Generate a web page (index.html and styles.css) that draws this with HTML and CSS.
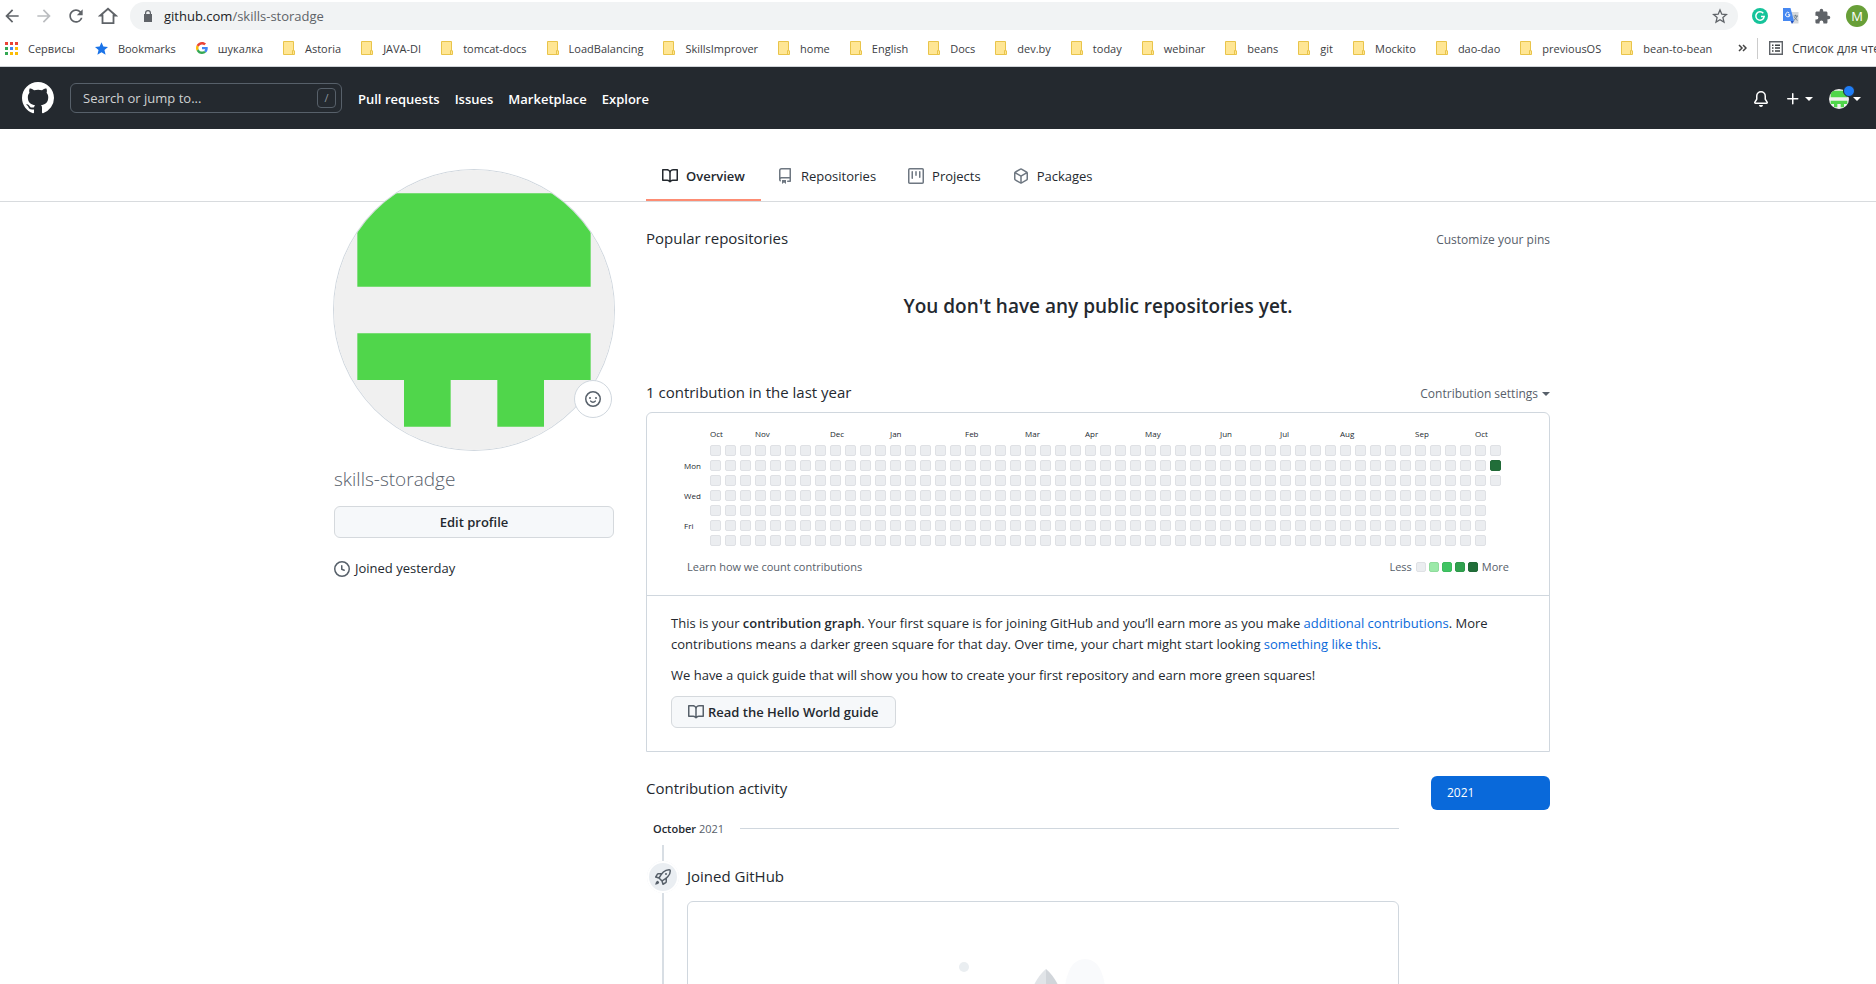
FILE: index.html
```html
<!DOCTYPE html>
<html lang="en">
<head>
<meta charset="utf-8">
<title>skills-storadge</title>
<link rel="stylesheet" href="styles.css">
</head>
<body>
<svg class="sprite" aria-hidden="true">
  <symbol id="folder" viewBox="0 0 12 14"><path d="M.5.5h10v9.300h1v3.700H.5z" fill="#ffe694" stroke="#e9c44a"/><path d="M9.500 13V9.500h1" fill="none" stroke="#e9c44a"/></symbol>
  <symbol id="book" viewBox="0 0 16 16"><path fill-rule="evenodd" d="M0 1.750A.75.75 0 01.75 1h4.253c1.227 0 2.317.59 3 1.501A3.744 3.744 0 0111.006 1h4.245a.75.75 0 01.75.75v10.500a.75.75 0 01-.75.75h-4.507a2.250 2.250 0 00-1.591.659l-.622.621a.75.75 0 01-1.060 0l-.622-.621A2.250 2.250 0 005.258 13H.75a.75.75 0 01-.75-.75V1.750zm8.755 3a2.250 2.250 0 012.250-2.250H14.500v9h-3.757c-.71 0-1.400.201-1.992.572l.004-7.322zm-1.504 7.324l.004-5.073-.002-2.253A2.250 2.250 0 005.003 2.500H1.500v9h3.757a3.750 3.750 0 011.994.574z"/></symbol>
  <symbol id="caret" viewBox="0 0 8 4"><path d="M0 0h8L4 4z"/></symbol>
  <symbol id="identicon" viewBox="0 0 420 420"><path fill="#f0f0f0" d="M0 0h420v420H0z"/><path fill="#50d64b" d="M35 35h350v140H35zM35 245h350v70h-70v70h-70v-70h-70v70h-70v-70H35z"/></symbol>
</svg>

<div class="browser">
  <div class="toolbar">
    <div class="toolbar-nav">
      <button class="icon-btn" aria-label="Back"><svg width="20" height="20" viewBox="0 0 24 24"><path d="M20 11H7.830l5.590-5.590L12 4l-8 8 8 8 1.410-1.410L7.830 13H20z"/></svg></button>
      <button class="icon-btn disabled" aria-label="Forward"><svg width="20" height="20" viewBox="0 0 24 24"><path d="M4 13h12.170l-5.590 5.590L12 20l8-8-8-8-1.410 1.410L16.170 11H4z"/></svg></button>
      <button class="icon-btn" aria-label="Reload"><svg width="20" height="20" viewBox="0 0 24 24"><path d="M17.650 6.350C16.200 4.900 14.210 4 12 4c-4.420 0-7.990 3.580-7.990 8s3.570 8 7.990 8c3.730 0 6.840-2.550 7.730-6h-2.080A5.990 5.990 0 0112 18c-3.310 0-6-2.690-6-6s2.690-6 6-6c1.660 0 3.140.69 4.220 1.780L13 11h7V4z"/></svg></button>
      <button class="icon-btn" aria-label="Home"><svg width="20" height="20" viewBox="0 0 20 20"><path d="M4.500 17.200V9.500H2.300L10 2.800l7.700 6.700h-2.200v7.700z" fill="none" stroke="#5f6368" stroke-width="1.800"/></svg></button>
    </div>
    <div class="omnibox">
      <svg width="10" height="12" viewBox="0 0 10 12"><path fill-rule="evenodd" d="M2 4V3a3 3 0 016 0v1h1v8H1V4zm1.200 0h3.600V3a1.800 1.800 0 00-3.600 0z"/></svg>
      <div class="url" role="textbox" aria-label="Address" contenteditable="true" spellcheck="false"><b>github.com</b>/skills-storadge</div>
      <button class="icon-btn" aria-label="Bookmark this page"><svg width="16" height="16" viewBox="0 0 16 16"><path d="M8 1.900l1.800 4.300 4.600.4-3.500 3 1.100 4.500L8 11.700l-4 2.400 1.100-4.500-3.500-3 4.600-.4z" fill="none" stroke="#5f6368" stroke-width="1.300"/></svg></button>
    </div>
    <div class="extensions">
      <button class="icon-btn" aria-label="Grammarly"><svg width="16" height="16" viewBox="0 0 16 16"><circle cx="8" cy="8" r="8" fill="#15c39a"/><path d="M11.300 5.300A4.200 4.200 0 1012.200 8.500H9" fill="none" stroke="#fff" stroke-width="1.500"/></svg></button>
      <button class="icon-btn" aria-label="Translate"><svg width="16" height="16" viewBox="0 0 16 16"><path d="M6 4h9.500v11.500H10z" fill="#d5d8db"/><path d="M0 0h7.500l3.500 13H0z" fill="#4688f1"/><path d="M7.500 13H11l-2 3z" fill="#1f4fc0"/><path d="M6.300 5A2.200 2.200 0 107 6.800H5" fill="none" stroke="#fff"/><path d="M10.500 8h4.500M12.500 6.800V8M14 8c-.4 2-1.700 3.500-3 4.200M11.500 9c.6 1.500 1.700 2.700 3 3.300" fill="none" stroke="#667887" stroke-width=".9"/></svg></button>
      <button class="icon-btn" aria-label="Extensions"><svg width="17" height="17" viewBox="0 0 24 24"><path d="M20.500 11H19V7c0-1.100-.9-2-2-2h-4V3.500a2.500 2.500 0 00-5 0V5H4c-1.100 0-1.990.9-1.990 2v3.800H3.500a2.700 2.700 0 010 5.400H2V20c0 1.100.9 2 2 2h3.800v-1.500a2.700 2.700 0 015.400 0V22H17c1.100 0 2-.9 2-2v-4h1.500a2.500 2.500 0 000-5z"/></svg></button>
      <button class="profile-btn">M</button>
    </div>
  </div>
  <div class="bookmarks">
    <nav class="bookmark-list">
      <a href="#"><svg width="13" height="13" viewBox="0 0 13 13"><path fill="#ea4335" d="M0 0h3v3H0zM5 0h3v3H5zM10 0h3v3h-3z"/><path fill="#34a853" d="M0 5h3v3H0zM0 10h3v3H0z"/><path fill="#4285f4" d="M5 5h3v3H5z"/><path fill="#fbbc05" d="M10 5h3v3h-3zM5 10h3v3H5zM10 10h3v3h-3z"/></svg>Сервисы</a>
      <a href="#"><svg width="13" height="13" viewBox="0 0 14 14"><path fill="#1a73e8" d="M7 .3l2 4.600 5 .5-3.800 3.300 1.200 4.900L7 11l-4.400 2.600 1.200-4.900L0 5.400l5-.5z"/></svg>Bookmarks</a>
      <a href="#"><svg width="12" height="12" viewBox="0 0 48 48"><path fill="#ea4335" d="M24 9.500c3.540 0 6.710 1.220 9.210 3.600l6.850-6.850C35.900 2.380 30.470 0 24 0 14.620 0 6.510 5.380 2.560 13.220l7.980 6.190C12.430 13.720 17.740 9.500 24 9.500z"/><path fill="#4285f4" d="M46.980 24.550c0-1.570-.15-3.090-.38-4.550H24v9.020h12.940c-.58 2.960-2.260 5.480-4.780 7.180l7.730 6c4.510-4.180 7.090-10.360 7.090-17.650z"/><path fill="#fbbc05" d="M10.530 28.590c-.48-1.450-.76-2.990-.76-4.590s.27-3.140.76-4.590l-7.980-6.190C.92 16.460 0 20.120 0 24c0 3.880.92 7.540 2.560 10.780z"/><path fill="#34a853" d="M24 48c6.480 0 11.930-2.130 15.890-5.810l-7.730-6c-2.150 1.450-4.920 2.300-8.160 2.300-6.260 0-11.570-4.220-13.470-9.910l-7.980 6.190C6.510 42.620 14.620 48 24 48z"/></svg>шукалка</a>
      <button><svg width="12" height="14"><use href="#folder"/></svg>Astoria</button>
      <button><svg width="12" height="14"><use href="#folder"/></svg>JAVA-DI</button>
      <button><svg width="12" height="14"><use href="#folder"/></svg>tomcat-docs</button>
      <button><svg width="12" height="14"><use href="#folder"/></svg>LoadBalancing</button>
      <button><svg width="12" height="14"><use href="#folder"/></svg>SkillsImprover</button>
      <button><svg width="12" height="14"><use href="#folder"/></svg>home</button>
      <button><svg width="12" height="14"><use href="#folder"/></svg>English</button>
      <button><svg width="12" height="14"><use href="#folder"/></svg>Docs</button>
      <button><svg width="12" height="14"><use href="#folder"/></svg>dev.by</button>
      <button><svg width="12" height="14"><use href="#folder"/></svg>today</button>
      <button><svg width="12" height="14"><use href="#folder"/></svg>webinar</button>
      <button><svg width="12" height="14"><use href="#folder"/></svg>beans</button>
      <button><svg width="12" height="14"><use href="#folder"/></svg>git</button>
      <button><svg width="12" height="14"><use href="#folder"/></svg>Mockito</button>
      <button><svg width="12" height="14"><use href="#folder"/></svg>dao-dao</button>
      <button><svg width="12" height="14"><use href="#folder"/></svg>previousOS</button>
      <button><svg width="12" height="14"><use href="#folder"/></svg>bean-to-bean</button>
    </nav>
    <div class="bookmark-end">
      <button class="icon-btn" aria-label="More bookmarks"><svg width="9" height="8" viewBox="0 0 9 8"><path d="M1 1l3 3-3 3M5 1l3 3-3 3" fill="none" stroke="#444" stroke-width="1.500"/></svg></button>
      <button class="reading-list"><svg width="14" height="14" viewBox="0 0 14 14"><path d="M.7.7h12.600v12.600H.7z" fill="none" stroke="#5f6368" stroke-width="1.400"/><path d="M3 3.500h1.500V5H3zM6 3.500h5V5H6zM3 6.300h1.500v1.500H3zM6 6.300h5v1.500H6zM3 9.200h1.500v1.500H3zM6 9.200h5v1.500H6z"/></svg>Список для чтения</button>
    </div>
  </div>
</div>

<header class="site-header">
  <a href="#" class="logo" aria-label="Homepage"><svg width="32" height="32" viewBox="0 0 16 16"><path d="M8 0C3.580 0 0 3.580 0 8c0 3.540 2.290 6.530 5.470 7.590.4.070.55-.17.55-.38 0-.19-.01-.82-.01-1.490-2.010.37-2.530-.49-2.690-.94-.09-.23-.48-.94-.82-1.130-.28-.15-.68-.52-.01-.53.63-.01 1.080.58 1.230.82.72 1.210 1.870.87 2.330.66.070-.52.28-.87.51-1.070-1.780-.2-3.640-.89-3.640-3.950 0-.87.31-1.590.82-2.150-.08-.2-.36-1.020.08-2.120 0 0 .67-.21 2.200.82.64-.18 1.320-.27 2-.27.68 0 1.360.09 2 .27 1.530-1.040 2.200-.82 2.200-.82.44 1.100.16 1.920.08 2.120.51.56.82 1.270.82 2.150 0 3.070-1.870 3.750-3.650 3.950.29.25.54.73.54 1.480 0 1.070-.01 1.930-.01 2.200 0 .21.15.46.55.38A8.013 8.013 0 0016 8c0-4.420-3.580-8-8-8z"/></svg></a>
  <label class="search"><input type="text" placeholder="Search or jump to..." aria-label="Search or jump to"><kbd>/</kbd></label>
  <nav class="site-nav">
    <a href="#">Pull requests</a><a href="#">Issues</a><a href="#">Marketplace</a><a href="#">Explore</a>
  </nav>
  <div class="site-actions">
    <a href="#" aria-label="Notifications"><svg width="16" height="16" viewBox="0 0 16 16"><path d="M8 16a2 2 0 001.985-1.750c.017-.137-.097-.25-.235-.25h-3.500c-.138 0-.252.113-.235.25A2 2 0 008 16z"/><path fill-rule="evenodd" d="M8 1.500A3.500 3.500 0 004.500 5v2.947c0 .346-.102.683-.294.97L2.500 11.500h11l-1.706-2.583a1.750 1.750 0 01-.294-.97V5A3.500 3.500 0 008 1.500zM3 5a5 5 0 0110 0v2.947c0 .05.015.098.042.139l1.703 2.555A1.518 1.518 0 0113.482 13H2.518a1.518 1.518 0 01-1.263-2.360l1.703-2.554A.25.25 0 003 7.947V5z"/></svg></a>
    <button class="menu-btn" aria-label="Create new"><svg width="16" height="16" viewBox="0 0 16 16"><path d="M7.750 2a.75.75 0 01.75.75V7h4.250a.75.75 0 110 1.500H8.500v4.250a.75.75 0 11-1.500 0V8.500H2.750a.75.75 0 010-1.500H7V2.750A.75.75 0 017.750 2z"/></svg><svg width="8" height="4"><use href="#caret"/></svg></button>
    <button class="menu-btn user-menu" aria-label="Account"><svg class="round" width="20" height="20"><use href="#identicon"/></svg><i class="dot"></i><svg width="8" height="4"><use href="#caret"/></svg></button>
  </div>
</header>

<div class="tabs-bar">
  <div class="container">
    <nav class="tabs">
      <a href="#" class="selected"><svg width="16" height="16"><use href="#book"/></svg>Overview</a>
      <a href="#"><svg width="16" height="16" viewBox="0 0 16 16"><path fill-rule="evenodd" d="M2 2.500A2.500 2.500 0 014.500 0h8.750a.75.75 0 01.75.75v12.500a.75.75 0 01-.75.75h-2.500a.75.75 0 110-1.500h1.750v-2h-8a1 1 0 00-.714 1.700.75.75 0 01-1.072 1.050A2.495 2.495 0 012 11.500v-9zm10.500-1V9h-8c-.356 0-.694.074-1 .208V2.500a1 1 0 011-1h8zM5 12.250v3.250a.25.25 0 00.4.2l1.450-1.087a.25.25 0 01.3 0L8.600 15.700a.25.25 0 00.4-.2v-3.250a.25.25 0 00-.25-.25h-3.500a.25.25 0 00-.25.25z"/></svg>Repositories</a>
      <a href="#"><svg width="16" height="16" viewBox="0 0 16 16"><path fill-rule="evenodd" d="M1.750 0A1.750 1.750 0 000 1.750v12.500C0 15.216.784 16 1.750 16h12.500A1.750 1.750 0 0016 14.250V1.750A1.750 1.750 0 0014.250 0H1.750zM1.500 1.750a.25.25 0 01.25-.25h12.500a.25.25 0 01.25.25v12.500a.25.25 0 01-.25.25H1.750a.25.25 0 01-.25-.25V1.750zM11.750 3a.75.75 0 00-.75.75v5.500a.75.75 0 001.500 0v-5.500a.75.75 0 00-.75-.75zm-8.250.75a.75.75 0 011.500 0v6.500a.75.75 0 01-1.500 0v-6.500zM8 3a.75.75 0 00-.75.75v3.500a.75.75 0 001.500 0v-3.500A.75.75 0 008 3z"/></svg>Projects</a>
      <a href="#"><svg width="16" height="16" viewBox="0 0 16 16"><path fill-rule="evenodd" d="M8.878.392a1.750 1.750 0 00-1.756 0l-5.250 3.045A1.750 1.750 0 001 4.951v6.098c0 .624.332 1.200.872 1.514l5.250 3.045a1.750 1.750 0 001.756 0l5.250-3.045c.54-.313.872-.89.872-1.514V4.951c0-.624-.332-1.200-.872-1.514L8.878.392zM7.875 1.690a.25.25 0 01.25 0l4.630 2.685L8 7.133 3.245 4.375l4.630-2.685zM2.500 5.677v5.372c0 .09.047.171.125.216l4.625 2.683V8.432L2.500 5.677zm6.250 8.271l4.625-2.683a.25.25 0 00.125-.216V5.677L8.750 8.432v5.516z"/></svg>Packages</a>
    </nav>
  </div>
</div>

<div class="container profile">
  <aside class="sidebar">
    <div class="avatar">
      <svg class="round" viewBox="0 0 420 420"><use href="#identicon"/></svg>
      <button class="status" aria-label="Set status"><svg width="16" height="16" viewBox="0 0 16 16"><circle cx="8" cy="8" r="7.250" fill="none" stroke="#57606a" stroke-width="1.500"/><circle cx="5" cy="7" r="1"/><circle cx="11" cy="7" r="1"/><path d="M5.700 10.100c.5.700 1.300 1.100 2.300 1.100s1.800-.4 2.300-1.100" fill="none" stroke="#57606a" stroke-width="1.400" stroke-linecap="round"/></svg></button>
    </div>
    <h1>skills-storadge</h1>
    <button class="btn btn-block">Edit profile</button>
    <p class="joined"><svg width="16" height="16" viewBox="0 0 16 16"><path fill-rule="evenodd" d="M1.500 8a6.500 6.500 0 1113 0 6.500 6.500 0 01-13 0zM8 0a8 8 0 100 16A8 8 0 008 0zm.5 4.750a.75.75 0 00-1.500 0v3.500a.75.75 0 00.471.696l2.500 1a.75.75 0 00.557-1.392L8.500 7.742V4.750z"/></svg>Joined yesterday</p>
  </aside>

  <main>
    <div class="section-head"><h2>Popular repositories</h2><button class="muted-btn">Customize your pins</button></div>
    <h3 class="blank">You don't have any public repositories yet.</h3>
    <div class="section-head"><h2>1 contribution in the last year</h2><button class="muted-btn">Contribution settings <svg width="8" height="4"><use href="#caret"/></svg></button></div>

    <section class="box">
      <div class="graph">
        <div class="weekdays"><span>Mon</span><span>Wed</span><span>Fri</span></div>
        <div class="calendar">
          <div class="months" id="months"></div>
          <div class="days" id="days"></div>
        </div>
      </div>
      <div class="graph-foot">
        <a href="#">Learn how we count contributions</a>
        <div class="legend">Less <span class="levels"><i></i><i class="l1"></i><i class="l2"></i><i class="l3"></i><i class="l4"></i></span> More</div>
      </div>
      <div class="intro">
        <p>This is your <strong>contribution graph</strong>. Your first square is for joining GitHub and you’ll earn more as you make <a href="#">additional contributions</a>. More contributions means a darker green square for that day. Over time, your chart might start looking <a href="#">something like this</a>.</p>
        <p>We have a quick guide that will show you how to create your first repository and earn more green squares!</p>
        <a href="#" class="btn"><svg width="16" height="16"><use href="#book"/></svg>Read the Hello World guide</a>
      </div>
    </section>

    <div class="activity">
      <div class="timeline">
        <h2>Contribution activity</h2>
        <h3 class="month"><span>October <em>2021</em></span></h3>
        <div class="event">
          <div class="rail"><span class="badge"><svg width="16" height="16" viewBox="0 0 16 16"><path fill-rule="evenodd" d="M14.064 0a8.750 8.750 0 00-6.187 2.563l-.459.458c-.314.314-.616.641-.904.979H3.310a1.750 1.750 0 00-1.490.833L.11 7.607a.75.75 0 00.418 1.110l3.102.954c.037.051.079.1.124.145l2.429 2.428c.046.046.094.088.145.125l.954 3.102a.75.75 0 001.110.418l2.774-1.707a1.750 1.750 0 00.833-1.490V9.485c.338-.288.665-.59.979-.904l.458-.459A8.750 8.750 0 0016 1.936V1.750A1.750 1.750 0 0014.250 0h-.186zM10.500 10.625c-.088.06-.177.118-.266.175l-2.350 1.521.548 1.783 1.949-1.200a.25.25 0 00.119-.213v-2.066zM3.678 8.116L5.200 5.766c.058-.09.117-.178.176-.266H3.309a.25.25 0 00-.213.119l-1.200 1.950 1.782.547zm5.260-4.493A7.250 7.250 0 0114.063 1.500h.186a.25.25 0 01.25.25v.186a7.250 7.250 0 01-2.123 5.127l-.459.458a15.210 15.210 0 01-2.499 2.020l-2.317 1.500-2.143-2.143 1.500-2.317a15.250 15.250 0 012.020-2.500l.458-.458h.002zM12 5a1 1 0 11-2 0 1 1 0 012 0zm-8.440 9.560a1.500 1.500 0 10-2.120-2.120c-.734.73-1.047 2.332-1.150 3.003a.23.23 0 00.265.265c.671-.103 2.273-.416 3.005-1.148z"/></svg></span></div>
          <div class="event-body">
            <h4>Joined GitHub</h4>
            <div class="event-card">
              <svg width="220" height="160" viewBox="0 0 220 160"><circle cx="31" cy="33" r="5" fill="#eaeef1"/><path d="M131 160V60c2-22 8-35 21-35s19 13 21 35v100z" fill="#f9fafc"/><path d="M113 35c-12 10-20 30-24 60v65h24z" fill="#e1e4e8"/><path d="M113 35c12 10 20 30 24 60v65h-24z" fill="#d1d5da"/></svg>
            </div>
          </div>
        </div>
      </div>
      <nav class="years"><a href="#">2021</a></nav>
    </div>
  </main>
</div>
<script src="graph.js"></script>
</body>
</html>
```
FILE: styles.css
```css
* { box-sizing: border-box; }
body {
  margin: 0;
  height: 100vh;
  overflow: hidden;
  background: #fff;
  color: #24292f;
  font: 13px/21px "Open Sans", "Noto Sans", sans-serif;
}
h1, h2, h3, h4, p { margin: 0; font-weight: 400; }
a { color: inherit; text-decoration: none; }
button { padding: 0; border: 0; background: none; color: inherit; font: inherit; white-space: nowrap; }
svg { display: block; flex: none; fill: currentColor; }
.sprite { position: absolute; width: 0; height: 0; }
.round { border-radius: 50%; }

/* Browser toolbar */
.browser { color: #3c4043; border-bottom: 1px solid #d0d4d8; }
.toolbar { display: flex; align-items: center; height: 32px; padding-right: 8px; }
.toolbar-nav { display: flex; gap: 12px; width: 130px; padding-left: 2px; }
.icon-btn { color: #5f6368; }
.disabled { color: #bbbdc0; }
.omnibox {
  display: flex; flex: 1; align-items: center; gap: 11px;
  height: 28px; padding: 0 10px 0 13px;
  border-radius: 14px; background: #f1f3f4; color: #5f6368;
}
.url { flex: 1; }
.url b { color: #202124; font-weight: 400; }
.extensions { display: flex; align-items: center; gap: 15px; padding-left: 14px; }
.profile-btn { width: 22px; height: 22px; border-radius: 50%; background: #689f38; color: #fff; line-height: 22px; }
.bookmarks { display: flex; align-items: center; height: 34px; padding: 0 0 2px 5px; font-size: 11px; }
.bookmark-list { display: flex; flex: 1; gap: 20px; min-width: 0; overflow: hidden; }
.bookmark-list > * { display: flex; align-items: center; gap: 10px; }
.bookmark-end { display: flex; align-items: center; gap: 10px; width: 138px; overflow: hidden; }
.reading-list { display: flex; align-items: center; gap: 9px; padding-left: 11px; border-left: 1px solid #ccc; font-size: 12px; }

/* Site header */
.site-header {
  display: flex; align-items: center; gap: 16px;
  height: 62px; padding: 0 15px 0 22px;
  background: #24292f; color: #fff;
}
.search {
  display: flex; align-items: center;
  width: 272px; height: 30px; padding: 0 5px 0 12px;
  border: 1px solid #57606a; border-radius: 6px;
}
.search input { flex: 1; min-width: 0; padding: 0; border: 0; background: none; color: #fff; font: inherit; }
.search input::placeholder { color: #cfd1d3; }
.search kbd {
  width: 19px; height: 20px; border: 1px solid #57606a; border-radius: 4px;
  color: #8b949e; font: 11px/18px "Open Sans", sans-serif; text-align: center;
}
.site-nav { display: flex; gap: 15px; padding-top: 2px; font-weight: 600; }
.site-actions { display: flex; align-items: center; gap: 16px; margin-left: auto; padding-top: 2px; }
.menu-btn { display: flex; align-items: center; gap: 4px; }
.user-menu { position: relative; }
.dot {
  position: absolute; left: 14px; top: -4px; width: 12px; height: 12px;
  border: 1px solid #24292f; border-radius: 50%; background: #1f7cf5;
}

/* Profile layout */
.container { max-width: 1280px; margin: 0 auto; padding: 0 32px; }
.tabs-bar { padding-left: 8px; border-bottom: 1px solid #d8dbde; }
.tabs { display: flex; margin-left: 312px; padding-top: 24px; }
.tabs a { display: flex; align-items: center; gap: 8px; height: 48px; padding: 0 16px; border-bottom: 2px solid transparent; }
.tabs svg { color: #6e7781; }
.tabs .selected { border-color: #fd8c73; font-weight: 600; }
.tabs .selected svg { color: inherit; }
.profile { display: grid; grid-template-columns: 280px minmax(0, 1fr); gap: 32px; max-width: 1288px; padding-left: 40px; }
.sidebar { position: relative; margin-top: -32px; }
.avatar { position: relative; }
.avatar > svg { width: 100%; box-shadow: 0 0 0 1px #d0d7de; }
.status {
  position: absolute; right: 2px; bottom: 32px;
  display: flex; align-items: center; justify-content: center;
  width: 38px; height: 38px; border: 1px solid #d0d7de; border-radius: 50%;
  background: #fff; color: #57606a;
}
.sidebar h1 { padding: 16px 0 14px; color: #57606a; font-size: 19px; font-weight: 300; line-height: 26px; }
.btn {
  display: inline-flex; align-items: center; justify-content: center; gap: 4px;
  height: 32px; padding: 0 16px; border: 1px solid #d5d9dd; border-radius: 6px;
  background: #f6f8fa; color: #24292f; font-weight: 600;
}
.btn svg { color: #57606a; }
.btn-block { width: 100%; }
.joined { display: flex; align-items: center; gap: 5px; margin-top: 20px; }
.joined svg { color: #57606a; }

h2, h4 { font-size: 15px; line-height: 24px; }
main { padding-top: 24px; }
.section-head { display: flex; align-items: flex-end; justify-content: space-between; margin-bottom: 8px; }
.muted-btn { display: flex; align-items: center; gap: 4px; color: #57606a; font-size: 12px; }
.blank { padding: 33px 0 59px; font-size: 19px; font-weight: 600; line-height: 30px; text-align: center; }

/* Contribution graph */
.box { border: 1px solid #d0d7de; border-radius: 6px 6px 0 0; }
.graph { display: flex; padding: 14px 37px 0; color: #24292f; font-size: 8px; line-height: 14px; }
.weekdays { display: flex; flex-direction: column; gap: 16px; width: 26px; padding-top: 32px; }
.months, .days { display: grid; gap: 4px; }
.months { grid-template-columns: repeat(53, 11px); height: 18px; }
.months span { width: 0; white-space: nowrap; grid-row: 1; }
.days { grid-template-rows: repeat(7, 11px); grid-auto-columns: 11px; grid-auto-flow: column; }
.days i, .levels i { border: 1px solid #dfe1e5; border-radius: 2px; background: #ebedf0; }
.graph-foot {
  display: flex; justify-content: space-between;
  padding: 10px 40px 18px; border-bottom: 1px solid #d0d7de;
  color: #57606a; font-size: 11px;
}
.legend { display: flex; align-items: center; gap: 4px; }
.levels { display: flex; gap: 3px; }
.levels i { width: 10px; height: 10px; }
.levels .l1 { background: #9be9a8; border-color: #8fdc9c; }
.levels .l2 { background: #40c463; border-color: #3cbb5d; }
.levels .l3 { background: #30a14e; border-color: #2d994a; }
.levels .l4, .days .l4 { background: #216e39; border-color: #206937; }
.intro { padding: 17px 24px 23px; }
.intro p { margin-bottom: 10px; }
.intro p a { color: #0969da; }
.intro strong { font-weight: 600; }

/* Activity */
.activity { display: flex; gap: 32px; margin-top: 24px; }
.timeline { flex: 1; }
.month { display: flex; align-items: center; gap: 16px; padding: 18px 0 6px 7px; font-size: 11px; font-weight: 600; }
.month::after { content: ""; flex: 1; height: 1px; background: #d0d7de; }
.month em { color: #57606a; font-style: normal; font-weight: 400; }
.event { display: flex; gap: 10px; }
.rail { display: flex; width: 31px; padding-top: 16px; justify-content: center; background: linear-gradient(#d8dee4, #d8dee4) 16px 0 / 2px 100% no-repeat; }
.badge {
  display: flex; flex: none; align-items: center; justify-content: center;
  width: 32px; height: 32px; margin-left: 3px; border-radius: 50%;
  background: #eaeef2; color: #57606a; box-shadow: inset 0 0 0 2px #fff;
}
.event-body { flex: 1; padding-top: 19px; }
.event-card { display: flex; justify-content: center; margin-top: 13px; padding: 32px 0; border: 1px solid #d0d7de; border-radius: 6px; }
.years { width: 119px; }
.years a { display: block; padding: 0 16px; border-radius: 6px; background: #0969da; color: #fff; font-size: 12px; line-height: 34px; }
```
FILE: graph.js
```js
const months = [
  ["Oct", 0], ["Nov", 3], ["Dec", 8], ["Jan", 12], ["Feb", 17], ["Mar", 21], ["Apr", 25],
  ["May", 29], ["Jun", 34], ["Jul", 38], ["Aug", 42], ["Sep", 47], ["Oct", 51]
];
const monthRow = document.getElementById("months");
for (const [name, week] of months) {
  const label = document.createElement("span");
  label.textContent = name;
  label.style.gridColumn = week + 1;
  monthRow.append(label);
}

const totalDays = 52 * 7 + 3;
const activeDay = 52 * 7 + 1;
const dayGrid = document.getElementById("days");
for (let day = 0; day < totalDays; day++) {
  const cell = document.createElement("i");
  if (day === activeDay) cell.className = "l4";
  dayGrid.append(cell);
}
```
